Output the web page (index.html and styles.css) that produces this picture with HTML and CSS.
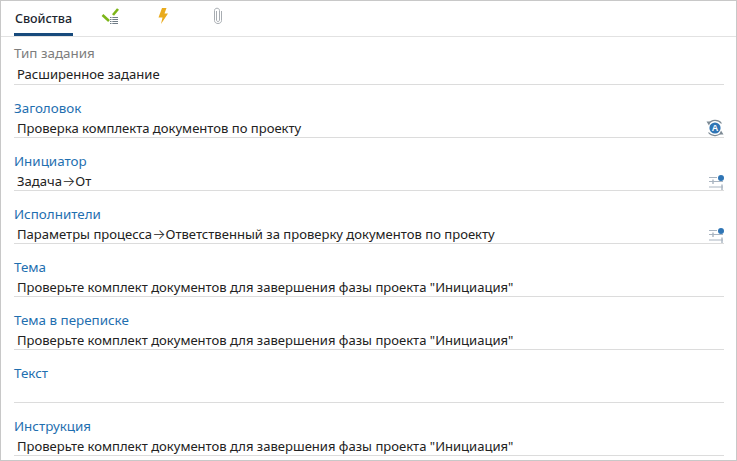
FILE: index.html
```html
<!DOCTYPE html>
<html lang="ru">
<head>
  <meta charset="UTF-8">
  <title>Свойства</title>
  <link rel="stylesheet" href="styles.css">
</head>
<body>
  <div class="panel">
    <div class="tabs">
      <div class="tab active">Свойства</div>
      <div class="tab icon-tab">
        <svg width="18" height="16" viewBox="0 0 18 16">
          <path d="M1.5 7 L8 13" stroke="#7cb518" stroke-width="2.6" fill="none"/>
          <path d="M12 7 L17 1" stroke="#7cb518" stroke-width="2.6" fill="none"/>
          <path d="M9 9.5h8M9 11.5h8M9 13.5h8M9 15.5h8" stroke="#6f7c86" stroke-width="1" stroke-dasharray="1.5 0.8 6 0" fill="none"/>
        </svg>
      </div>
      <div class="tab icon-tab">
        <svg width="12" height="17" viewBox="0 0 12 17">
          <path d="M5 0 H9.5 L7.5 5.5 H11 L4 16 L5.5 9.5 H1.5 Z" fill="#e9ab1e"/>
        </svg>
      </div>
      <div class="tab icon-tab">
        <svg width="10" height="18" viewBox="0 0 10 18">
          <path d="M3.5 4 V13 C3.5 15 6.5 15 6.5 13 V3.5 C6.5 0.5 1.5 0.5 1.5 3.5 V13.5 C1.5 17.5 8.5 17.5 8.5 13.5 V4" stroke="#a8adb2" stroke-width="1" fill="none"/>
        </svg>
      </div>
    </div>

    <div class="fields">
      <div class="field first">
        <div class="label muted">Тип задания</div>
        <div class="value">Расширенное задание</div>
      </div>
      <div class="field">
        <div class="label">Заголовок</div>
        <div class="value">Проверка комплекта документов по проекту
          <svg class="action" width="18" height="18" viewBox="0 0 18 18">
            <path d="M2.5 5 A8 8 0 0 1 15.5 4.5" stroke="#7d8a94" stroke-width="1.2" fill="none"/>
            <path d="M15.5 13 A8 8 0 0 1 2.5 13.5" stroke="#7d8a94" stroke-width="1.2" fill="none"/>
            <path d="M0.5 2.5 L4.5 2.5 L3 6.5 Z M17.5 15.5 L13.5 15.5 L15 11.5 Z" fill="#7d8a94"/>
            <circle cx="9" cy="9" r="5.6" fill="#2f75b5"/>
            <text class="auto-letter" x="9" y="12">A</text>
          </svg>
        </div>
      </div>
      <div class="field">
        <div class="label">Инициатор</div>
        <div class="value">Задача<span class="arrow">→</span>От
          <svg class="action" width="16" height="15" viewBox="0 0 16 15">
            <path d="M1 2.5h8M1 6.5h14M1 12h14" stroke="#a9b4c0" stroke-width="1" fill="none"/>
            <path d="M5 4.5v4.5M14 9.5v5.5" stroke="#a9b4c0" stroke-width="1.4" fill="none"/>
            <circle cx="13" cy="3" r="3" fill="#2f75b5"/>
          </svg>
        </div>
      </div>
      <div class="field">
        <div class="label">Исполнители</div>
        <div class="value">Параметры процесса<span class="arrow">→</span>Ответственный за проверку документов по проекту
          <svg class="action" width="16" height="15" viewBox="0 0 16 15">
            <path d="M1 2.5h8M1 6.5h14M1 12h14" stroke="#a9b4c0" stroke-width="1" fill="none"/>
            <path d="M5 4.5v4.5M14 9.5v5.5" stroke="#a9b4c0" stroke-width="1.4" fill="none"/>
            <circle cx="13" cy="3" r="3" fill="#2f75b5"/>
          </svg>
        </div>
      </div>
      <div class="field">
        <div class="label">Тема</div>
        <div class="value">Проверьте комплект документов для завершения фазы проекта "Инициация"</div>
      </div>
      <div class="field">
        <div class="label">Тема в переписке</div>
        <div class="value">Проверьте комплект документов для завершения фазы проекта "Инициация"</div>
      </div>
      <div class="field">
        <div class="label">Текст</div>
        <div class="value"></div>
      </div>
      <div class="field">
        <div class="label">Инструкция</div>
        <div class="value">Проверьте комплект документов для завершения фазы проекта "Инициация"</div>
      </div>
    </div>
  </div>
</body>
</html>
```

FILE: styles.css
```css
html, body {
  margin: 0;
  padding: 0;
  height: 100%;
  background-color: #fff;
  overflow: hidden;
}

body {
  font-family: 'Noto Sans', 'Open Sans', sans-serif;
  font-size: 13.05px;
  color: #222;
}

.panel {
  box-sizing: border-box;
  width: 737px;
  height: 461px;
  border: 1px solid #c8c8c8;
  overflow: hidden;
}

.tabs {
  display: flex;
  height: 35px;
  border-bottom: 1px solid #e2e2e2;
  padding-left: 13px;
}

.tab {
  display: flex;
  align-items: center;
  justify-content: center;
  height: 35px;
}

.tab.active {
  box-sizing: border-box;
  width: 59px;
  font-size: 12.5px;
  font-weight: 500;
  color: #1c2530;
  border-bottom: 3px solid #174a7c;
  padding-top: 3px;
}

.icon-tab {
  box-sizing: border-box;
  padding-bottom: 5px;
}

.icon-tab:nth-child(2) { margin-left: 28px; }
.icon-tab:nth-child(3) { margin-left: 38px; }
.icon-tab:nth-child(4) { margin-left: 44px; }

.fields {
  padding: 8px 12px 0 13px;
}

.field {
  margin-bottom: 15px;
}

.label {
  height: 16px;
  line-height: 17px;
  font-size: 13.4px;
  color: #1f6fb0;
}

.label.muted {
  color: #7d7d7d;
}

.value {
  position: relative;
  height: 21px;
  line-height: 24px;
  padding-left: 3px;
  border-bottom: 1px solid #dcdcdc;
  white-space: nowrap;
}

.first .value {
  height: 23px;
  line-height: 26px;
}

.arrow {
  font-family: 'Inter', sans-serif;
  font-size: 14px;
  font-weight: 300;
}

.action {
  position: absolute;
  right: 0;
  bottom: 0;
}

.auto-letter {
  font-family: 'Liberation Sans', sans-serif;
  font-size: 9px;
  font-weight: bold;
  fill: #fff;
  text-anchor: middle;
}
```
